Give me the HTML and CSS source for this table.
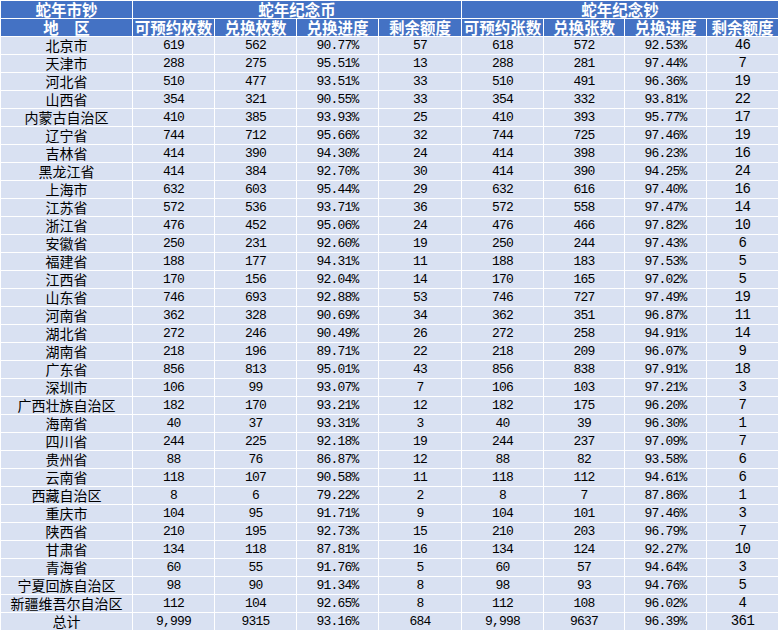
FILE: index.html
```html
<!DOCTYPE html>
<html lang="zh-CN">
<head>
<meta charset="utf-8">
<title>蛇年纪念币钞兑换进度</title>
<link rel="stylesheet" href="styles.css">
</head>
<body>
<table class="sheet">
<colgroup>
<col class="c-region"><col class="c1"><col class="c2"><col class="c3"><col class="c4"><col class="c5"><col class="c6"><col class="c7"><col class="c8">
</colgroup>
<tbody>
<tr class="head"><td>蛇年市钞</td><td colspan="4">蛇年纪念币</td><td colspan="4">蛇年纪念钞</td></tr>
<tr class="head"><td>地　区</td><td>可预约枚数</td><td>兑换枚数</td><td>兑换进度</td><td>剩余额度</td><td>可预约张数</td><td>兑换张数</td><td>兑换进度</td><td>剩余额度</td></tr>
<tr><td>北京市</td><td class="n">619</td><td class="n">562</td><td class="n">90.77%</td><td class="n">57</td><td class="n">618</td><td class="n">572</td><td class="n">92.53%</td><td class="n last">46</td></tr>
<tr><td>天津市</td><td class="n">288</td><td class="n">275</td><td class="n">95.51%</td><td class="n">13</td><td class="n">288</td><td class="n">281</td><td class="n">97.44%</td><td class="n last">7</td></tr>
<tr><td>河北省</td><td class="n">510</td><td class="n">477</td><td class="n">93.51%</td><td class="n">33</td><td class="n">510</td><td class="n">491</td><td class="n">96.36%</td><td class="n last">19</td></tr>
<tr><td>山西省</td><td class="n">354</td><td class="n">321</td><td class="n">90.55%</td><td class="n">33</td><td class="n">354</td><td class="n">332</td><td class="n">93.81%</td><td class="n last">22</td></tr>
<tr><td>内蒙古自治区</td><td class="n">410</td><td class="n">385</td><td class="n">93.93%</td><td class="n">25</td><td class="n">410</td><td class="n">393</td><td class="n">95.77%</td><td class="n last">17</td></tr>
<tr><td>辽宁省</td><td class="n">744</td><td class="n">712</td><td class="n">95.66%</td><td class="n">32</td><td class="n">744</td><td class="n">725</td><td class="n">97.46%</td><td class="n last">19</td></tr>
<tr><td>吉林省</td><td class="n">414</td><td class="n">390</td><td class="n">94.30%</td><td class="n">24</td><td class="n">414</td><td class="n">398</td><td class="n">96.23%</td><td class="n last">16</td></tr>
<tr><td>黑龙江省</td><td class="n">414</td><td class="n">384</td><td class="n">92.70%</td><td class="n">30</td><td class="n">414</td><td class="n">390</td><td class="n">94.25%</td><td class="n last">24</td></tr>
<tr><td>上海市</td><td class="n">632</td><td class="n">603</td><td class="n">95.44%</td><td class="n">29</td><td class="n">632</td><td class="n">616</td><td class="n">97.40%</td><td class="n last">16</td></tr>
<tr><td>江苏省</td><td class="n">572</td><td class="n">536</td><td class="n">93.71%</td><td class="n">36</td><td class="n">572</td><td class="n">558</td><td class="n">97.47%</td><td class="n last">14</td></tr>
<tr><td>浙江省</td><td class="n">476</td><td class="n">452</td><td class="n">95.06%</td><td class="n">24</td><td class="n">476</td><td class="n">466</td><td class="n">97.82%</td><td class="n last">10</td></tr>
<tr><td>安徽省</td><td class="n">250</td><td class="n">231</td><td class="n">92.60%</td><td class="n">19</td><td class="n">250</td><td class="n">244</td><td class="n">97.43%</td><td class="n last">6</td></tr>
<tr><td>福建省</td><td class="n">188</td><td class="n">177</td><td class="n">94.31%</td><td class="n">11</td><td class="n">188</td><td class="n">183</td><td class="n">97.53%</td><td class="n last">5</td></tr>
<tr><td>江西省</td><td class="n">170</td><td class="n">156</td><td class="n">92.04%</td><td class="n">14</td><td class="n">170</td><td class="n">165</td><td class="n">97.02%</td><td class="n last">5</td></tr>
<tr><td>山东省</td><td class="n">746</td><td class="n">693</td><td class="n">92.88%</td><td class="n">53</td><td class="n">746</td><td class="n">727</td><td class="n">97.49%</td><td class="n last">19</td></tr>
<tr><td>河南省</td><td class="n">362</td><td class="n">328</td><td class="n">90.69%</td><td class="n">34</td><td class="n">362</td><td class="n">351</td><td class="n">96.87%</td><td class="n last">11</td></tr>
<tr><td>湖北省</td><td class="n">272</td><td class="n">246</td><td class="n">90.49%</td><td class="n">26</td><td class="n">272</td><td class="n">258</td><td class="n">94.91%</td><td class="n last">14</td></tr>
<tr><td>湖南省</td><td class="n">218</td><td class="n">196</td><td class="n">89.71%</td><td class="n">22</td><td class="n">218</td><td class="n">209</td><td class="n">96.07%</td><td class="n last">9</td></tr>
<tr><td>广东省</td><td class="n">856</td><td class="n">813</td><td class="n">95.01%</td><td class="n">43</td><td class="n">856</td><td class="n">838</td><td class="n">97.91%</td><td class="n last">18</td></tr>
<tr><td>深圳市</td><td class="n">106</td><td class="n">99</td><td class="n">93.07%</td><td class="n">7</td><td class="n">106</td><td class="n">103</td><td class="n">97.21%</td><td class="n last">3</td></tr>
<tr><td>广西壮族自治区</td><td class="n">182</td><td class="n">170</td><td class="n">93.21%</td><td class="n">12</td><td class="n">182</td><td class="n">175</td><td class="n">96.20%</td><td class="n last">7</td></tr>
<tr><td>海南省</td><td class="n">40</td><td class="n">37</td><td class="n">93.31%</td><td class="n">3</td><td class="n">40</td><td class="n">39</td><td class="n">96.30%</td><td class="n last">1</td></tr>
<tr><td>四川省</td><td class="n">244</td><td class="n">225</td><td class="n">92.18%</td><td class="n">19</td><td class="n">244</td><td class="n">237</td><td class="n">97.09%</td><td class="n last">7</td></tr>
<tr><td>贵州省</td><td class="n">88</td><td class="n">76</td><td class="n">86.87%</td><td class="n">12</td><td class="n">88</td><td class="n">82</td><td class="n">93.58%</td><td class="n last">6</td></tr>
<tr><td>云南省</td><td class="n">118</td><td class="n">107</td><td class="n">90.58%</td><td class="n">11</td><td class="n">118</td><td class="n">112</td><td class="n">94.61%</td><td class="n last">6</td></tr>
<tr><td>西藏自治区</td><td class="n">8</td><td class="n">6</td><td class="n">79.22%</td><td class="n">2</td><td class="n">8</td><td class="n">7</td><td class="n">87.86%</td><td class="n last">1</td></tr>
<tr><td>重庆市</td><td class="n">104</td><td class="n">95</td><td class="n">91.71%</td><td class="n">9</td><td class="n">104</td><td class="n">101</td><td class="n">97.46%</td><td class="n last">3</td></tr>
<tr><td>陕西省</td><td class="n">210</td><td class="n">195</td><td class="n">92.73%</td><td class="n">15</td><td class="n">210</td><td class="n">203</td><td class="n">96.79%</td><td class="n last">7</td></tr>
<tr><td>甘肃省</td><td class="n">134</td><td class="n">118</td><td class="n">87.81%</td><td class="n">16</td><td class="n">134</td><td class="n">124</td><td class="n">92.27%</td><td class="n last">10</td></tr>
<tr><td>青海省</td><td class="n">60</td><td class="n">55</td><td class="n">91.76%</td><td class="n">5</td><td class="n">60</td><td class="n">57</td><td class="n">94.64%</td><td class="n last">3</td></tr>
<tr><td>宁夏回族自治区</td><td class="n">98</td><td class="n">90</td><td class="n">91.34%</td><td class="n">8</td><td class="n">98</td><td class="n">93</td><td class="n">94.76%</td><td class="n last">5</td></tr>
<tr><td>新疆维吾尔自治区</td><td class="n">112</td><td class="n">104</td><td class="n">92.65%</td><td class="n">8</td><td class="n">112</td><td class="n">108</td><td class="n">96.02%</td><td class="n last">4</td></tr>
<tr><td>总计</td><td class="n">9,999</td><td class="n">9315</td><td class="n">93.16%</td><td class="n">684</td><td class="n">9,998</td><td class="n">9637</td><td class="n">96.39%</td><td class="n last">361</td></tr>
</tbody>
</table>
</body>
</html>
```
FILE: styles.css
```css
html, body {
  margin: 0;
  padding: 0;
  background: #ffffff;
}

.sheet {
  border-collapse: separate;
  border-spacing: 1px;
  table-layout: fixed;
  width: 779px;
  background: #ffffff;
}

.c-region { width: 131px; }
.c1 { width: 81px; }
.c2 { width: 81px; }
.c3 { width: 81px; }
.c4 { width: 82px; }
.c5 { width: 81px; }
.c6 { width: 80px; }
.c7 { width: 81px; }
.c8 { width: 71px; }

.sheet td {
  padding: 0;
  height: 17px;
  line-height: 17px;
  text-align: center;
  vertical-align: middle;
  white-space: nowrap;
  background: #d9e1f2;
  color: #000000;
  font-family: "Noto Sans CJK SC", sans-serif;
  font-size: 14px;
}

.sheet td.n {
  font-family: "Liberation Mono", monospace;
  font-size: 13px;
  letter-spacing: -0.8px;
}

.sheet td.last {
  font-size: 14px;
  letter-spacing: -0.6px;
}

.sheet .head td {
  background: #4472c4;
  color: #ffffff;
  font-weight: bold;
  font-size: 15.5px;
}
```
